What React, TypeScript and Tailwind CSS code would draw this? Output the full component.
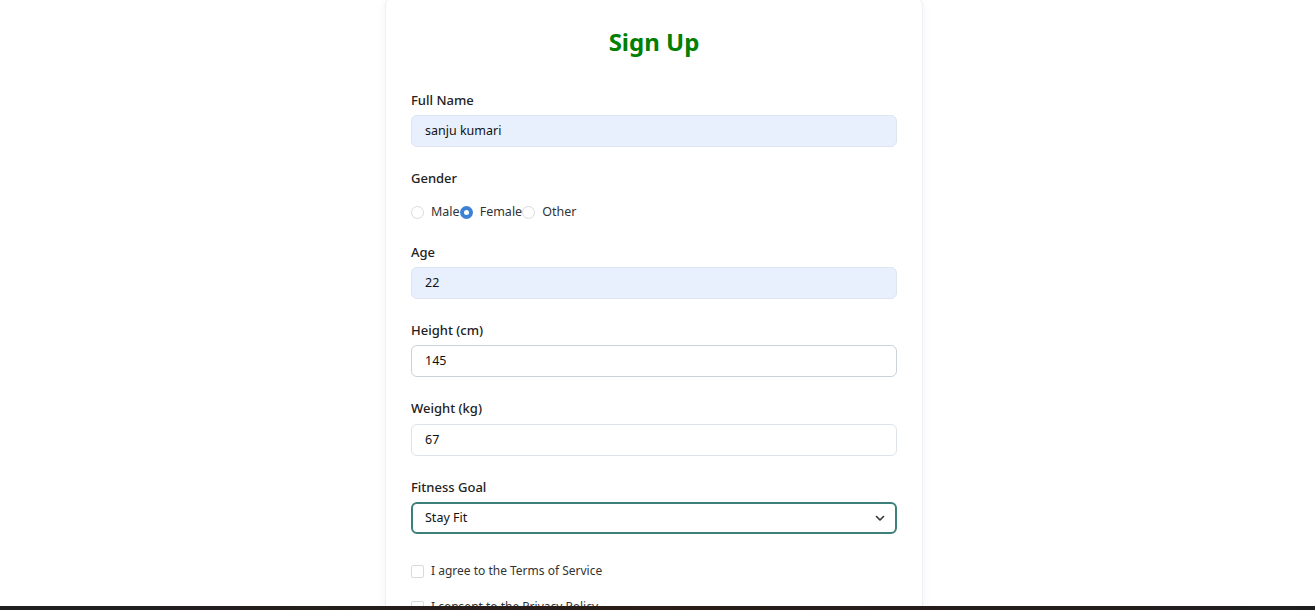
import React from "react";

const font = { fontFamily: '"Noto Sans", "Open Sans", sans-serif' };

function Field({ label, className = "mb-[21px]", children }: { label: string; className?: string; children: React.ReactNode }) {
  return (
    <div className={className}>
      <label className="block h-[20px] mb-[5px] text-[13px] leading-[20px] font-medium text-[#222]">{label}</label>
      {children}
    </div>
  );
}

function Radio({ checked, label }: { checked?: boolean; label: string }) {
  return (
    <label className="flex items-center">
      {checked ? (
        <span className="w-[13px] h-[13px] rounded-full bg-[#3b82d6] flex items-center justify-center">
          <span className="w-[5px] h-[5px] rounded-full bg-white" />
        </span>
      ) : (
        <span className="w-[13px] h-[13px] rounded-full border border-[#d5dbe3] bg-white" />
      )}
      <span className="ml-[7px] text-[12.5px] text-[#333]">{label}</span>
    </label>
  );
}

function Check({ label }: { label: string }) {
  return (
    <label className="flex items-center h-[36px]">
      <span className="w-[13px] h-[13px] rounded-[2px] border border-[#d5dbe3] bg-white" />
      <span className="ml-[7px] text-[12px] text-[#333]">{label}</span>
    </label>
  );
}

export default function App() {
  return (
    <div className="h-[610px] flex flex-col bg-white overflow-hidden" style={font}>
      <div className="flex-1 overflow-hidden flex justify-center pr-[7px]">
        <div className="w-[538px] -mt-[3px] h-fit bg-white border border-[#eceff3] rounded-[8px] shadow-[0_2px_10px_rgba(0,0,0,0.05)] px-[25px] pt-[28px] pb-6">
          <h2 className="text-center text-[24px] leading-[32px] font-bold text-[#008000] mb-[32px]">Sign Up</h2>

          <Field label="Full Name">
            <div className="h-[32px] rounded-[6px] border border-[#dde5f0] bg-[#e8f0fe] px-[13px] flex items-center text-[12.5px] text-[#111]">
              sanju kumari
            </div>
          </Field>

          <div className="mb-[20px]">
            <label className="block h-[20px] text-[13px] leading-[20px] font-medium text-[#222]">Gender</label>
            <div className="flex items-center h-[20px] mt-[14px]">
              <Radio label="Male" />
              <Radio checked label="Female" />
              <Radio label="Other" />
            </div>
          </div>

          <Field label="Age">
            <div className="h-[32px] rounded-[6px] border border-[#dde5f0] bg-[#e8f0fe] px-[13px] flex items-center text-[12.5px] text-[#111]">
              22
            </div>
          </Field>

          <Field label="Height (cm)">
            <div className="h-[32px] rounded-[6px] border border-[#c9d1da] bg-white px-[13px] flex items-center text-[12.5px] text-[#111]">
              145
            </div>
          </Field>

          <Field label="Weight (kg)" className="mb-[21px] [&>label]:mb-[6px]">
            <div className="h-[32px] rounded-[6px] border border-[#dee3e9] bg-white px-[13px] flex items-center text-[12.5px] text-[#111]">
              67
            </div>
          </Field>

          <Field label="Fitness Goal">
            <div className="h-[32px] rounded-[6px] border-2 border-[#3d7f7a] bg-white pl-[12px] pr-[10px] flex items-center justify-between text-[12.5px] text-[#111]">
              <span>Stay Fit</span>
              <svg width="10" height="10" viewBox="0 0 10 10" fill="none">
                <path d="M1.5 3.5 L5 7 L8.5 3.5" stroke="#333" strokeWidth="1.6" strokeLinecap="round" strokeLinejoin="round" />
              </svg>
            </div>
          </Field>

          <div className="-mt-[2px]">
            <Check label="I agree to the Terms of Service" />
            <Check label="I consent to the Privacy Policy" />
          </div>
        </div>
      </div>
      <div className="h-[4px] bg-gradient-to-r from-[#1e1f20] via-[#2a1c17] to-[#1f1e1e]" />
    </div>
  );
}
